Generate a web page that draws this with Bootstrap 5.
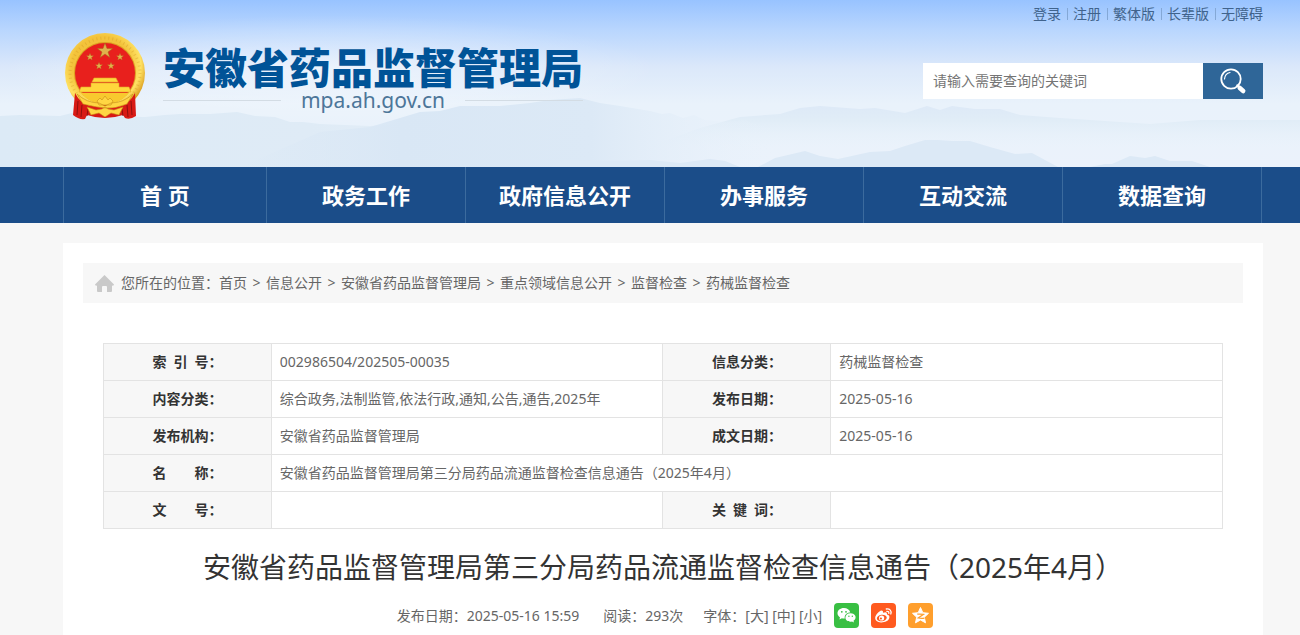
<!DOCTYPE html>
<html lang="zh-CN">
<head>
<meta charset="utf-8">
<meta name="viewport" content="width=device-width, initial-scale=1">
<title>安徽省药品监督管理局</title>
<link href="https://cdn.jsdelivr.net/npm/bootstrap@5.3.0/dist/css/bootstrap.min.css" rel="stylesheet">
<style>
  body { font-family: "Noto Sans", "Noto Sans CJK SC", sans-serif; font-size: 14px; line-height: 24px; color: #666; background: #f7f7f7; }
  a { color: inherit; text-decoration: none; }
  .page-wrap { padding-left: 63px; padding-right: 37px; }
  .site-head { height: 167px; }
  .scenery { z-index: 0; }
  .head-inner { z-index: 1; }
  .top-links { color: #40638c; padding-top: 2px; height: 32px; }
  .top-links li + li::before { content: ""; display: inline-block; width: 1px; height: 12px; margin: 0 5px 0 6px; background: #84a8d6; vertical-align: -1px; }
  .brand-text { margin-top: 20px; }
  .brand-name { font-size: 42px; line-height: 48px; font-weight: 900; color: #005397; margin: 0; }
  .brand-sub { gap: 20px; }
  .brand-rule { height: 1px; background: #d3dce4; }
  .brand-domain { font-size: 21px; line-height: 16px; color: #4d7699; }
  .search-box { width: 340px; height: 36px; margin-top: 31px; }
  .search-box .form-control { font-size: 14px; padding: 0 10px 2px; color: #333; }
  .search-box .form-control::placeholder { color: #757575; }
  .search-btn { width: 60px; background: #2f6698; }
  .main-nav { background: #1b4d89; }
  .main-nav .page-wrap { padding-right: 38px; }
  .main-nav .nav-item { border-right: 1px solid #3c6b9e; }
  .main-nav .nav-item:first-child { border-left: 1px solid #3c6b9e; flex-grow: 1.02 !important; }
  .main-nav .nav-link { color: #fff; font-size: 22px; font-weight: 700; line-height: 56px; padding: 0; }
  .content-card { margin-top: 20px; }
  .crumbs { background: #f7f7f7; height: 40px; padding-left: 12px; }
  .crumbs ol { margin-left: 7px; }
  .crumbs li + li::before { content: ">"; display: inline-block; width: 19px; text-align: center; }
  .meta-table { table-layout: fixed; }
  .meta-table th, .meta-table td { border: 1px solid #e3e3e3; height: 37px; padding: 6px 8px; line-height: 24px; font-weight: 400; }
  .meta-table th { background: #f7f7f7; color: #333; font-weight: 700; text-align: center; }
  .doc-title { font-size: 28px; line-height: 44px; color: #333; font-weight: 400; margin-bottom: 14px; }
  .share { width: 25px; height: 25px; }
</style>
</head>
<body>
<div class="min-vh-100 d-flex flex-column">
  <header class="site-head position-relative">
    <svg class="scenery position-absolute top-0 start-0 w-100 h-100" viewBox="0 0 1300 167" preserveAspectRatio="none" aria-hidden="true">
      <defs>
        <linearGradient id="sky" x1="0" y1="0" x2="0" y2="1">
          <stop offset="0" stop-color="#98c3ff"/><stop offset=".18" stop-color="#b9d6fe"/><stop offset=".4" stop-color="#dbe8fa"/><stop offset=".62" stop-color="#e9f2fb"/><stop offset="1" stop-color="#ebf2fb"/>
        </linearGradient>
        <linearGradient id="left" x1="0" y1="0" x2="1" y2="0">
          <stop offset="0" stop-color="#dceaf6"/><stop offset=".5" stop-color="#dfebf6"/><stop offset="1" stop-color="#dfebf6" stop-opacity="0"/>
        </linearGradient>
        <linearGradient id="middle" x1="0" y1="0" x2="1" y2="0">
          <stop offset="0" stop-color="#d9e7f5" stop-opacity="0"/><stop offset=".3" stop-color="#d9e7f5"/><stop offset=".65" stop-color="#dce9f6"/><stop offset="1" stop-color="#e9f2fb" stop-opacity="0"/>
        </linearGradient>
        <linearGradient id="haze" gradientUnits="userSpaceOnUse" x1="0" y1="105" x2="0" y2="150">
          <stop offset="0" stop-color="#dde9f7"/><stop offset=".35" stop-color="#e1edf7"/><stop offset="1" stop-color="#e9f2fb" stop-opacity="0"/>
        </linearGradient>
        <radialGradient id="glow"><stop offset="0" stop-color="#fff" stop-opacity=".45"/><stop offset="1" stop-color="#fff" stop-opacity="0"/></radialGradient>
      </defs>
      <rect width="1300" height="167" fill="url(#sky)"/>
      <ellipse cx="330" cy="70" rx="330" ry="55" fill="url(#glow)"/>
      <path fill="url(#haze)" d="M640 150L700 128 740 117 780 114 800 108 820 106 860 109 875 108 905 113 927 106 940 110 952 106 975 109 1000 109 1020 115 1060 118 1150 124 1200 120 1300 120V160H690Z"/>
      <path fill="url(#left)" d="M0 116L20 115 60 116 72 113 85 116 145 117 165 115 180 114 210 114 237 112 255 116 275 117 290 122 303 122 320 124 370 126 400 124 480 132 620 167H0Z"/>
      <path fill="url(#middle)" d="M240 167L320 132 370 127 390 121 420 112 440 111 460 106 500 106 530 103 550 100 580 98 600 103 620 106 650 111 662 114 670 113 683 118 694 115 705 120 725 122 745 120 755 124 780 130V167H240Z"/>
      <path fill="#dce9f6" d="M550 167L565 160 600 161 650 160 680 163 710 159 725 161 740 167ZM758 167L775 158 805 151 820 156 838 159 870 152 890 151 905 146 925 140 938 140 952 141 970 141 990 147 1015 154 1032 153 1045 160 1058 167ZM1090 167L1105 164 1112 164 1130 156 1145 158 1155 156 1170 161 1192 161 1210 167Z"/>
    </svg>
    <div class="head-inner page-wrap position-relative d-flex justify-content-between">
      <a href="#" class="d-flex pt-4">
        <svg class="mt-2" width="84" height="88" viewBox="0 0 84 88" role="img" aria-label="国徽">
          <defs>
            <radialGradient id="gold" cx=".45" cy=".4" r=".6"><stop offset=".6" stop-color="#f3c33b"/><stop offset=".83" stop-color="#ffe263"/><stop offset="1" stop-color="#d99a1d"/></radialGradient>
            <path id="star" d="M0-8L2 -2.5H7.6L3 1 4.8 6.5 0 3 -4.8 6.5 -3 1 -7.6-2.5H-2Z"/>
          </defs>
          <circle cx="42" cy="41" r="40" fill="url(#gold)"/>
          <circle cx="42" cy="41" r="35" fill="none" stroke="#cf911d" stroke-width="3" stroke-dasharray="1 3" opacity=".35"/>
          <circle cx="42" cy="41" r="31" fill="#dd9d22"/>
          <circle cx="42" cy="41" r="30" fill="#e8201d"/>
          <path fill="#d81a15" d="M12 61Q17 71 27 74L42 80 57 74Q67 71 72 61L73 84Q67 88 62 86L60 83Q42 89 24 83L22 87Q16 88 10 83Z"/>
          <path stroke="#8f100e" stroke-width="1" fill="none" d="M15 69L14 83M19 73L18 85M68 69L69 83M64 73L65 85M25 77L24 84M59 77L60 84"/>
          <g fill="#e0b34c" stroke="#a76918" stroke-width=".5">
            <use href="#star" transform="translate(42 19)"/>
            <use href="#star" transform="translate(27 25) scale(.48)"/><use href="#star" transform="translate(57 25) scale(.48)"/>
            <use href="#star" transform="translate(36 34) scale(.48)"/><use href="#star" transform="translate(48 34) scale(.48)"/>
          </g>
          <path fill="#ffd83c" stroke="#e0a52a" stroke-width=".6" d="M31 46H53L55 50H29ZM28 51H56V55H66L68 60H16L18 55H28Z"/>
          <path fill="#f8c92e" d="M18 61H66Q57 72 42 72T18 61Z"/>
          <path fill="#dc1c17" d="M24 74L34 72H50L60 74 57 79Q42 86 27 79Z"/>
          <path fill="#ffd643" stroke="#c88c16" stroke-width=".6" d="M34 69L37 66 39 68 42 64 45 68 47 66 50 69 48 73H36ZM14 62Q24 71 36 71L42 74 48 71Q60 71 70 62L64 72Q52 77 42 76T20 72ZM24 75L33 78 39 77 42 75 45 77 51 78 60 75 56 83 48 81 42 85 36 81 28 83Z"/>
        </svg>
        <div class="brand-text ms-3">
          <h1 class="brand-name text-nowrap">安徽省药品监督管理局</h1>
          <div class="brand-sub d-flex align-items-center">
            <span class="brand-rule flex-grow-1"></span>
            <span class="brand-domain">mpa.ah.gov.cn</span>
            <span class="brand-rule flex-grow-1"></span>
          </div>
        </div>
      </a>
      <div class="d-flex flex-column align-items-end">
        <ul class="top-links list-unstyled d-flex mb-0">
          <li><a href="#">登录</a></li><li><a href="#">注册</a></li><li><a href="#">繁体版</a></li><li><a href="#">长辈版</a></li><li><a href="#">无障碍</a></li>
        </ul>
        <form class="search-box d-flex">
          <input class="form-control border-0 rounded-0" type="text" placeholder="请输入需要查询的关键词" aria-label="请输入需要查询的关键词">
          <button class="search-btn btn rounded-0 border-0 p-0 flex-shrink-0" type="button" aria-label="搜索">
            <svg width="28" height="28" viewBox="0 0 28 28" fill="none" stroke="#fff" stroke-linecap="round"><circle cx="12" cy="12" r="9.7" stroke-width="1.8"/><path d="M5.5 12Q6 6.500 11 5.500" stroke-width="1.200"/><path d="M18.500 18.500L21 21" stroke-width="2.500"/><path d="M20.800 21L24.200 24" stroke-width="4.500"/></svg>
          </button>
        </form>
      </div>
    </div>
  </header>

  <nav class="main-nav" aria-label="主导航">
    <div class="page-wrap">
      <ul class="nav nav-fill nav-justified flex-nowrap">
        <li class="nav-item"><a class="nav-link" href="#">首 页</a></li>
        <li class="nav-item"><a class="nav-link" href="#">政务工作</a></li>
        <li class="nav-item"><a class="nav-link" href="#">政府信息公开</a></li>
        <li class="nav-item"><a class="nav-link" href="#">办事服务</a></li>
        <li class="nav-item"><a class="nav-link" href="#">互动交流</a></li>
        <li class="nav-item"><a class="nav-link" href="#">数据查询</a></li>
      </ul>
    </div>
  </nav>

  <div class="page-wrap flex-grow-1 d-flex flex-column">
    <main class="content-card bg-white flex-grow-1 pt-1">
      <div class="p-3">
        <div class="px-1">
          <nav class="crumbs d-flex align-items-center" aria-label="当前位置">
            <svg width="19" height="17" viewBox="0 0 19 17" fill="#c9c9c9" aria-hidden="true"><path d="M9.500 0L19 9.500Q19 11 17 10.500V16Q17 17 16 17H12V12Q12 11 11 11H8Q7 11 7 12V17H3Q2 17 2 16V10.500Q0 11 0 9.500Z"/></svg>
            <ol class="list-unstyled d-flex mb-0">
              <li>您所在的位置：<a href="#">首页</a></li><li><a href="#">信息公开</a></li><li><a href="#">安徽省药品监督管理局</a></li><li><a href="#">重点领域信息公开</a></li><li><a href="#">监督检查</a></li><li><a href="#">药械监督检查</a></li>
            </ol>
          </nav>
        </div>
      </div>
      <article class="px-3 pt-4">
        <div class="px-4">
          <table class="meta-table w-100 mb-3">
            <colgroup><col style="width:15%"><col style="width:35%"><col style="width:15%"><col style="width:35%"></colgroup>
            <tbody>
              <tr><th scope="row">索&ensp;引&ensp;号：</th><td>002986504/202505-00035</td><th scope="row">信息分类：</th><td>药械监督检查</td></tr>
              <tr><th scope="row">内容分类：</th><td>综合政务,法制监管,依法行政,通知,公告,通告,2025年</td><th scope="row">发布日期：</th><td>2025-05-16</td></tr>
              <tr><th scope="row">发布机构：</th><td>安徽省药品监督管理局</td><th scope="row">成文日期：</th><td>2025-05-16</td></tr>
              <tr><th scope="row">名&emsp;&emsp;称：</th><td colspan="3">安徽省药品监督管理局第三分局药品流通监督检查信息通告（2025年4月）</td></tr>
              <tr><th scope="row">文&emsp;&emsp;号：</th><td></td><th scope="row">关&ensp;键&ensp;词：</th><td></td></tr>
            </tbody>
          </table>
        </div>
        <h2 class="doc-title text-center">安徽省药品监督管理局第三分局药品流通监督检查信息通告（2025年4月）</h2>
        <div class="d-flex justify-content-center align-items-center ps-1">
          <span class="me-4">发布日期：2025-05-16 15:59</span>
          <span class="me-3 pe-1">阅读：293次</span>
          <span class="me-2">字体：<a href="#">[大]</a> <a href="#">[中]</a> <a href="#">[小]</a></span>
          <div class="d-flex gap-2 ms-1">
            <a class="share d-flex me-1" href="#" aria-label="分享到微信"><svg width="25" height="25" viewBox="0 0 25 25"><rect width="25" height="25" rx="4" fill="#39bf43"/><path fill="#fff" d="M10 5C6 5 3.500 7.400 3.500 10.300 3.500 12 4.500 13.400 6 14.400L5.400 16.500 7.900 15.200Q9.500 15.600 10.800 15.400C10.100 11.800 13 9.300 16.300 9.400 15.600 6.700 13 5 10 5Z"/><path fill="#fff" d="M16.500 10.200C13.400 10.200 11.400 12.200 11.400 14.500 11.400 17.500 14.600 19.300 18 18.500L20 19.500 19.500 17.700C23.500 15 21.500 10.200 16.500 10.200Z"/><g fill="#39bf43"><circle cx="7.800" cy="8.800" r=".9"/><circle cx="12" cy="8.800" r=".9"/><circle cx="14.900" cy="13.200" r=".7"/><circle cx="18.300" cy="13.200" r=".7"/></g></svg></a>
            <a class="share d-flex me-1" href="#" aria-label="分享到微博"><svg width="25" height="25" viewBox="0 0 25 25"><rect width="25" height="25" rx="4" fill="#ff5a1f"/><path fill="#fff" d="M10.500 7.600Q12.500 7.600 12 9.800 16.500 8.200 16 11.500 19 12.300 18.300 15C17.500 18 13.500 19.600 10 19.400 6.300 19.200 4 17.200 4.200 14.800 4.500 12 8 8 10.500 7.600Z"/><ellipse cx="10.800" cy="15" rx="5" ry="3.300" fill="#ff5a1f" transform="rotate(-8 10.800 15)"/><circle cx="10.600" cy="15" r="2.600" fill="#fff"/><circle cx="9.900" cy="15.500" r="1.100" fill="#ff5a1f"/><path fill="none" stroke="#fff" stroke-width="1.300" stroke-linecap="round" d="M15.300 6C18.700 5.500 21 8 19.800 11M15.800 8.300Q18.300 8.200 17.800 10.400"/></svg></a>
            <a class="share d-flex" href="#" aria-label="分享到QQ空间"><svg width="25" height="25" viewBox="0 0 25 25"><rect width="25" height="25" rx="4" fill="#ff9f2d"/><path fill="#fff" stroke="#fff" stroke-linejoin="round" d="M12.500 4.500L14.800 9.700 20.500 10.300 16.300 14.200 17.500 19.800 12.500 17 7.500 19.800 8.700 14.200 4.500 10.300 10.200 9.700Z"/><path fill="none" stroke="#ff9f2d" stroke-width="1.300" d="M9.200 11.200Q12.500 10.800 15.500 11.400L10.200 15Q13 15.800 16.500 15.200"/></svg></a>
          </div>
        </div>
      </article>
    </main>
  </div>
</div>
<script src="https://cdn.jsdelivr.net/npm/bootstrap@5.3.0/dist/js/bootstrap.bundle.min.js"></script>
</body>
</html>
